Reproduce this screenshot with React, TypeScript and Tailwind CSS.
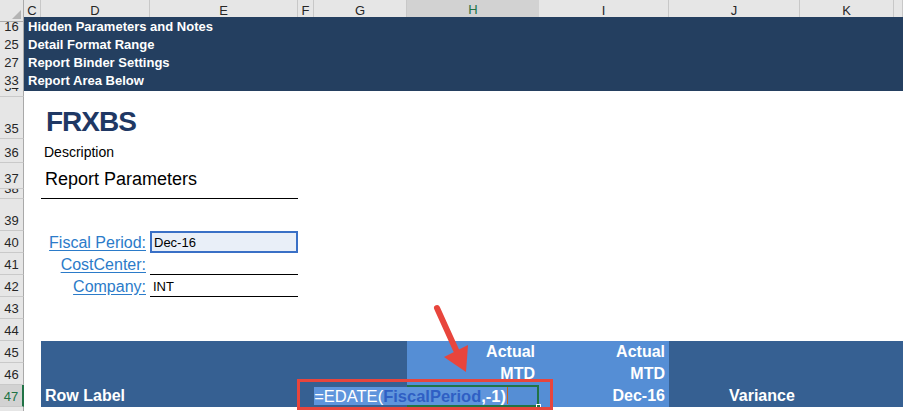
const COLS =
  'grid grid-cols-[24px_17px_109px_148px_16px_93px_132px_130px_131px_94px_1fr]';

const DARK = 'bg-[#243f60]';
const TBL = 'bg-[#366092]';
const LIGHT = 'bg-[#558ed5]';

function RowHead({ n, active }: { n: string; active?: boolean }) {
  return (
    <div
      className={
        active
          ? 'flex items-end justify-center overflow-hidden bg-[#d2d2d2] border-b border-[#c9c9c9] border-r-2 border-r-[#217346] pb-[3px] text-[13px] leading-none text-[#217346]'
          : 'flex items-end justify-center overflow-hidden bg-[#e6e6e6] border-b border-[#c9c9c9] border-r border-r-[#a9a9a9] pb-[3px] text-[13px] leading-none text-[#262626]'
      }
    >
      {n}
    </div>
  );
}

function Row({
  n,
  h,
  active,
  children,
}: {
  n: string;
  h: string;
  active?: boolean;
  children?: React.ReactNode;
}) {
  return (
    <div className={`${COLS} ${h}`}>
      <RowHead n={n} active={active} />
      {children}
    </div>
  );
}

function ColHead({ label, active }: { label: string; active?: boolean }) {
  return (
    <div
      className={
        active
          ? 'flex items-center justify-center bg-[#d2d2d2] border-b-2 border-[#217346] text-[13px] text-[#217346]'
          : 'flex items-center justify-center bg-[#e6e6e6] border-r border-[#c8c8c8] border-b border-b-[#ababab] text-[13px] text-[#262626]'
      }
    >
      {label}
    </div>
  );
}

function BandLabel({ children }: { children: React.ReactNode }) {
  return (
    <div className={`col-start-2 col-end-12 ${DARK} flex items-center pl-[4px] text-[13px] font-bold text-white whitespace-nowrap`}>
      {children}
    </div>
  );
}

function ParamLabel({ children }: { children: React.ReactNode }) {
  return (
    <div className="col-start-2 col-end-4 flex items-end justify-end pr-[4px] pb-[2px] text-[16px] leading-none text-[#2b7bc9] underline underline-offset-2 whitespace-nowrap">
      {children}
    </div>
  );
}

export default function App() {
  return (
    <div className="relative w-[903px] h-[411px] overflow-hidden bg-white font-['Liberation_Sans',Arial,sans-serif]">
      {/* column headers */}
      <div className={`${COLS} h-[17px]`}>
        <div className="relative bg-[#e6e6e6] border-r border-b border-[#ababab]">
          <svg className="absolute right-[2px] bottom-[2px]" width="9" height="9" viewBox="0 0 9 9">
            <polygon points="9,0 9,9 0,9" fill="#b4b4b4" />
          </svg>
        </div>
        <ColHead label="C" />
        <ColHead label="D" />
        <ColHead label="E" />
        <ColHead label="F" />
        <ColHead label="G" />
        <ColHead label="H" active />
        <ColHead label="I" />
        <ColHead label="J" />
        <ColHead label="K" />
        <ColHead label="" />
      </div>

      {/* collapsed sections */}
      <Row n="16" h="h-[18px]">
        <BandLabel>Hidden Parameters and Notes</BandLabel>
      </Row>
      <Row n="25" h="h-[18px]">
        <BandLabel>Detail Format Range</BandLabel>
      </Row>
      <Row n="27" h="h-[18px]">
        <BandLabel>Report Binder Settings</BandLabel>
      </Row>
      <Row n="33" h="h-[17px]">
        <BandLabel>Report Area Below</BandLabel>
      </Row>
      <Row n="34" h="h-[9px]" />

      {/* title block */}
      <Row n="35" h="h-[42px]">
        <div className="col-start-3 col-end-6 flex items-end pl-[5px] pb-[3px] text-[28px] font-bold leading-none tracking-[-1px] text-[#1f3864]">
          FRXBS
        </div>
      </Row>
      <Row n="36" h="h-[24px]">
        <div className="col-start-3 col-end-5 flex items-end pl-[3px] pb-[4px] text-[14px] leading-none text-black">
          Description
        </div>
      </Row>
      <Row n="37" h="h-[26px]">
        <div className="col-start-3 col-end-5 flex items-end pl-[4px] pb-[1px] text-[18px] leading-none text-black">
          Report Parameters
        </div>
      </Row>
      <Row n="38" h="h-[10px]">
        <div className="col-start-3 col-end-5 border-b border-black" />
      </Row>
      <Row n="39" h="h-[32px]" />

      {/* parameters */}
      <Row n="40" h="h-[22px]">
        <ParamLabel>Fiscal Period:</ParamLabel>
        <div className="col-start-4 col-end-5 flex items-end border-2 border-[#3a70c6] bg-[#e9eff8] pl-[2px] pb-[2px] text-[13px] leading-none text-black">
          Dec-16
        </div>
      </Row>
      <Row n="41" h="h-[22px]">
        <ParamLabel>CostCenter:</ParamLabel>
        <div className="col-start-4 col-end-5 border-b border-black" />
      </Row>
      <Row n="42" h="h-[22px]">
        <ParamLabel>Company:</ParamLabel>
        <div className="col-start-4 col-end-5 flex items-end border-b border-black pl-[3px] pb-[3px] text-[13px] leading-none text-black">
          INT
        </div>
      </Row>
      <Row n="43" h="h-[22px]" />
      <Row n="44" h="h-[22px]" />

      {/* report table header */}
      <Row n="45" h="h-[22px]">
        <div className={`col-start-3 col-end-7 ${TBL}`} />
        <div className={`col-start-7 col-end-8 ${LIGHT} flex items-end justify-end pr-[4px] pb-[3px] text-[16px] font-bold leading-none text-white`}>
          Actual
        </div>
        <div className={`col-start-8 col-end-9 ${LIGHT} flex items-end justify-end pr-[4px] pb-[3px] text-[16px] font-bold leading-none text-white`}>
          Actual
        </div>
        <div className={`col-start-9 col-end-12 ${TBL}`} />
      </Row>
      <Row n="46" h="h-[22px]">
        <div className={`col-start-3 col-end-7 ${TBL}`} />
        <div className={`col-start-7 col-end-8 ${LIGHT} flex items-end justify-end pr-[4px] pb-[3px] text-[16px] font-bold leading-none text-white`}>
          MTD
        </div>
        <div className={`col-start-8 col-end-9 ${LIGHT} flex items-end justify-end pr-[4px] pb-[3px] text-[16px] font-bold leading-none text-white`}>
          MTD
        </div>
        <div className={`col-start-9 col-end-12 ${TBL}`} />
      </Row>
      <Row n="47" h="h-[22px]" active>
        <div className={`col-start-3 col-end-6 ${TBL} flex items-end pl-[4px] pb-[3px] text-[16px] font-bold leading-none text-white whitespace-nowrap`}>
          Row Label
        </div>
        <div className={`col-start-6 col-end-7 ${TBL}`} />
        {/* cell in edit mode */}
        <div className={`relative col-start-7 col-end-8 ${LIGHT} flex items-stretch justify-end border-2 border-[#217346] pr-[29px] whitespace-nowrap`}>
          <span className="flex items-end bg-[#5f95dc] pb-[1px] text-[16.5px] leading-none">
            <span className="text-white">=EDATE(</span>
            <span className="font-bold text-[#2f5fc4]">FiscalPeriod</span>
            <span className="font-bold text-white">,-1)</span>
            <span className="ml-[1px] h-[17px] w-px bg-[#c5641e]" />
          </span>
          <div className="absolute right-[-4px] bottom-[-4px] h-[5px] w-[5px] border border-white bg-[#217346]" />
        </div>
        <div className={`col-start-8 col-end-9 ${LIGHT} flex items-end justify-end pr-[4px] pb-[3px] text-[16px] font-bold leading-none text-white`}>
          Dec-16
        </div>
        <div className={`col-start-9 col-end-12 ${TBL} flex items-end pl-[60px] pb-[3px] text-[16px] font-bold leading-none text-white`}>
          Variance
        </div>
      </Row>
      <Row n="48" h="h-[22px]" />

      {/* annotation: red box + arrow */}
      <div className="absolute left-[297px] top-[379px] h-[31px] w-[256px] border-[3px] border-[#e8453c]" />
      <svg className="pointer-events-none absolute left-0 top-0" width="903" height="411" viewBox="0 0 903 411">
        <line x1="437" y1="308" x2="456" y2="350" stroke="#e8453c" strokeWidth="6" strokeLinecap="round" />
        <polygon points="466,372 444,357 468,345" fill="#e8453c" />
      </svg>
    </div>
  );
}
